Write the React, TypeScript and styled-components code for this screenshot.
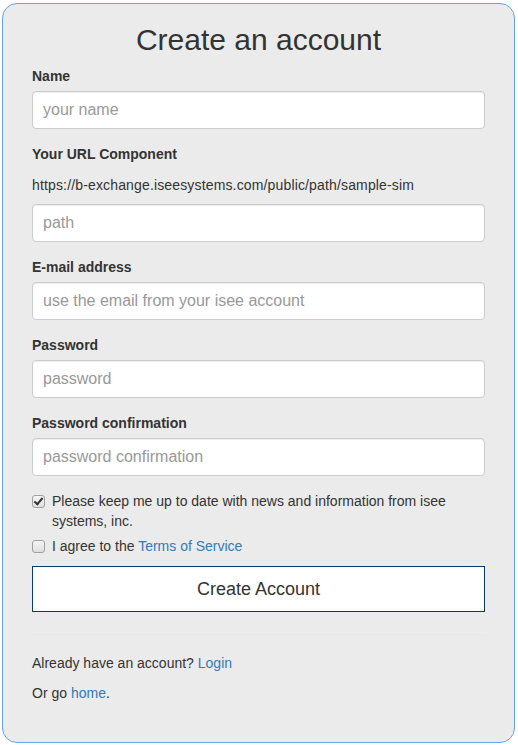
import styled, { createGlobalStyle } from 'styled-components';

const GlobalStyle = createGlobalStyle`
  html, body {
    margin: 0;
    padding: 0;
    background: #ffffff;
  }
  body {
    font-family: "Liberation Sans", Arial, sans-serif;
    font-size: 14px;
    line-height: 1.42857;
    color: #333333;
  }
  * { box-sizing: border-box; }
`;

const Card = styled.div`
  margin: 3px 3px 2px 2px;
  padding: 19px 29px 29px 29px;
  background: #ebebeb;
  border: 1px solid #66a3e3;
  border-radius: 15px;
`;

const Title = styled.h2`
  margin: 0 0 10px 0;
  font-size: 30px;
  font-weight: 400;
  line-height: 33px;
  text-align: center;
  color: #333;
`;

const Group = styled.div`
  margin-bottom: 15px;
`;

const Label = styled.label`
  display: block;
  margin-bottom: 5px;
  font-weight: 700;
  font-size: 14px;
  line-height: 20px;
`;

const UrlText = styled.p`
  margin: 11px 0 9px 0;
  line-height: 20px;
  letter-spacing: 0.15px;
`;

const Input = styled.input`
  display: block;
  width: 100%;
  height: 38px;
  padding: 6px 10px;
  font-family: "Liberation Sans", Arial, sans-serif;
  font-size: 16px;
  color: #555;
  background: #fff;
  border: 1px solid #cccccc;
  border-radius: 4px;
  box-shadow: inset 0 1px 1px rgba(0, 0, 0, 0.075);
  outline: none;
  &::placeholder {
    color: #999;
  }
`;

const CheckRow = styled.label<{ $tight?: boolean }>`
  display: flex;
  align-items: flex-start;
  gap: 7px;
  margin: ${(p) => (p.$tight ? '5px 0 10px 0' : '0')};
  line-height: 20px;
  cursor: pointer;
`;

const Box = styled.input`
  appearance: none;
  flex: none;
  position: relative;
  width: 13px;
  height: 13px;
  margin: 4px 0 0 0;
  border: 1px solid #a0a0a0;
  border-radius: 3px;
  background: linear-gradient(#f6f6f6, #dedede);
  &:checked::after {
    content: '';
    position: absolute;
    left: 3px;
    top: 0px;
    width: 3px;
    height: 7px;
    border: solid #333;
    border-width: 0 2px 2px 0;
    transform: rotate(40deg);
  }
`;

const Link = styled.a`
  color: #337ab7;
  text-decoration: none;
`;

const Submit = styled.button`
  display: block;
  width: 100%;
  height: 46px;
  padding: 10px 16px;
  font-family: "Liberation Sans", Arial, sans-serif;
  font-size: 18px;
  line-height: 24px;
  color: #333;
  background: #fff;
  border: 1px solid #0b3b6e;
  border-radius: 0;
  cursor: pointer;
`;

const Rule = styled.hr`
  margin: 20px 0;
  border: 0;
  border-top: 1px solid #eeeeee;
`;

const Note = styled.p`
  margin: 0 0 10px 0;
  line-height: 20px;
`;

const fields = [
  { label: 'E-mail address', placeholder: 'use the email from your isee account', type: 'email' },
  { label: 'Password', placeholder: 'password', type: 'password' },
  { label: 'Password confirmation', placeholder: 'password confirmation', type: 'password' },
];

export default function App() {
  return (
    <>
      <GlobalStyle />
      <Card>
        <Title>Create an account</Title>
        <Group>
          <Label>Name</Label>
          <Input placeholder="your name" />
        </Group>
        <Group>
          <Label>Your URL Component</Label>
          <UrlText>https://b-exchange.iseesystems.com/public/path/sample-sim</UrlText>
          <Input placeholder="path" />
        </Group>
        {fields.map((f) => (
          <Group key={f.label}>
            <Label>{f.label}</Label>
            <Input type={f.type} placeholder={f.placeholder} />
          </Group>
        ))}
        <CheckRow>
          <Box type="checkbox" defaultChecked />
          <span>Please keep me up to date with news and information from isee systems, inc.</span>
        </CheckRow>
        <CheckRow $tight>
          <Box type="checkbox" />
          <span>
            I agree to the <Link href="#">Terms of Service</Link>
          </span>
        </CheckRow>
        <Submit type="button">Create Account</Submit>
        <Rule />
        <Note>
          Already have an account? <Link href="#">Login</Link>
        </Note>
        <Note>
          Or go <Link href="#">home</Link>.
        </Note>
      </Card>
    </>
  );
}
